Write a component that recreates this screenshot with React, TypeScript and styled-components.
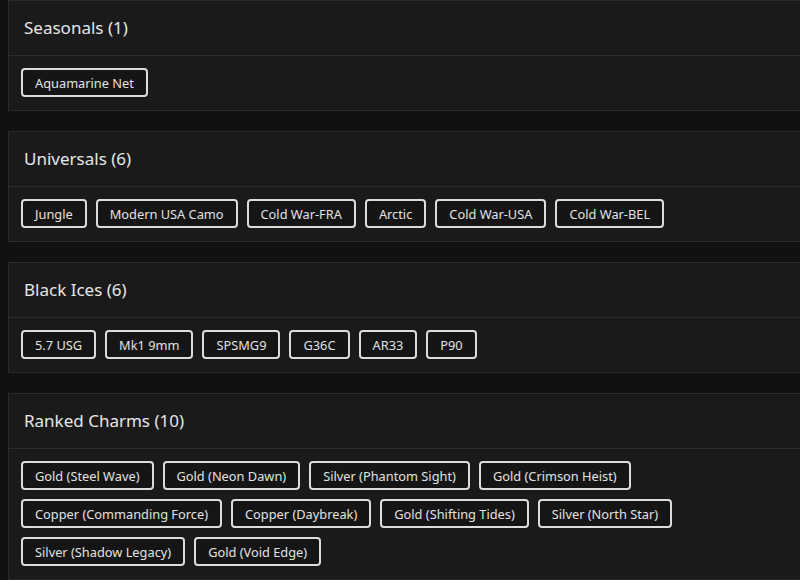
import React from "react";
import styled, { createGlobalStyle } from "styled-components";

const Global = createGlobalStyle`
  html, body { margin: 0; padding: 0; background: #111111; overflow: hidden; }
  body { font-family: "Noto Sans", "DejaVu Sans", sans-serif; }
`;

const Page = styled.div`
  display: flex;
  flex-direction: column;
  gap: 20px;
  padding-left: 8px;
  margin-right: -20px;
`;

const Card = styled.section`
  background: #1a1a1a;
  border: 1px solid #2a2a2a;
  box-sizing: border-box;
`;

const Header = styled.div`
  box-sizing: border-box;
  height: 55px;
  display: flex;
  align-items: center;
  padding: 0 15px 2px;
  border-bottom: 1px solid #2c2c2c;
  font-size: 17px;
  font-weight: 400;
  color: #e6e6e6;
`;

const Chips = styled.div`
  display: flex;
  flex-wrap: wrap;
  gap: 9px;
  max-width: 760px;
  padding: 12px 12px 13px 12px;
`;

const Chip = styled.span`
  box-sizing: border-box;
  height: 29px;
  display: inline-flex;
  align-items: center;
  padding: 0 12px;
  border: 2px solid #dcdcdc;
  border-radius: 4px;
  background: #151515;
  color: #e2e2e2;
  font-size: 12.8px;
  white-space: nowrap;
`;

const sections: { title: string; items: string[] }[] = [
  { title: "Seasonals", items: ["Aquamarine Net"] },
  {
    title: "Universals",
    items: ["Jungle", "Modern USA Camo", "Cold War-FRA", "Arctic", "Cold War-USA", "Cold War-BEL"],
  },
  { title: "Black Ices", items: ["5.7 USG", "Mk1 9mm", "SPSMG9", "G36C", "AR33", "P90"] },
  {
    title: "Ranked Charms",
    items: [
      "Gold (Steel Wave)",
      "Gold (Neon Dawn)",
      "Silver (Phantom Sight)",
      "Gold (Crimson Heist)",
      "Copper (Commanding Force)",
      "Copper (Daybreak)",
      "Gold (Shifting Tides)",
      "Silver (North Star)",
      "Silver (Shadow Legacy)",
      "Gold (Void Edge)",
    ],
  },
];

export default function App() {
  return (
    <>
      <Global />
      <Page>
        {sections.map((s) => (
          <Card key={s.title}>
            <Header>
              {s.title} ({s.items.length})
            </Header>
            <Chips>
              {s.items.map((i) => (
                <Chip key={i}>{i}</Chip>
              ))}
            </Chips>
          </Card>
        ))}
      </Page>
    </>
  );
}
